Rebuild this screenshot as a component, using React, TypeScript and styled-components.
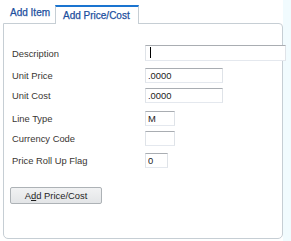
import React from "react";
import styled, { createGlobalStyle } from "styled-components";

const GlobalStyle = createGlobalStyle`
  html, body {
    margin: 0;
    padding: 0;
    background: #f1fbfe;
    font-family: "Liberation Sans", Arial, sans-serif;
  }
`;

const Frame = styled.div`
  width: 283px;
  height: 241px;
  background: #ffffff;
  box-sizing: border-box;
`;

const TabBar = styled.div`
  display: flex;
  align-items: flex-end;
  height: 23px;
  padding: 5px 0 0 3px;
  box-sizing: border-box;
`;

const Tab = styled.div<{ $active?: boolean }>`
  box-sizing: border-box;
  height: ${(p) => (p.$active ? "19px" : "18px")};
  font-size: 10px;
  line-height: 12px;
  color: #1c4f9e;
  -webkit-text-stroke: 0.25px #1c4f9e;
  white-space: nowrap;
  background: #ffffff;
  ${(p) =>
    p.$active
      ? `
    position: relative;
    z-index: 1;
    margin-bottom: -1px;
    border-top: 2px solid #1a74d0;
    border-left: 1px solid #c6ced4;
    border-right: 1px solid #c6ced4;
    padding: 3px 8px 0 7px;
  `
      : `
    width: 52px;
    padding: 2px 0 0 7px;
  `}
`;

const Panel = styled.div`
  margin-left: 3px;
  width: 280px;
  height: 216px;
  box-sizing: border-box;
  border: 1px solid #c6ced4;
  border-radius: 0 4px 5px 5px;
  padding: 21px 0 0 6px;
  display: flex;
  flex-direction: column;
`;

const Row = styled.div<{ $gap: number }>`
  display: grid;
  grid-template-columns: 135px auto;
  align-items: center;
  margin-top: ${(p) => p.$gap}px;
`;

const Label = styled.span`
  padding-left: 2px;
  font-size: 9.4px;
  color: #3a3633;
  white-space: nowrap;
`;

const FieldWrap = styled.div`
  position: relative;
  display: flex;
`;

const Field = styled.input<{ $w: number; $h?: number }>`
  box-sizing: border-box;
  width: ${(p) => p.$w}px;
  height: ${(p) => p.$h ?? 15}px;
  margin: 0;
  padding: 0 0 0 2px;
  border-top: 1px solid #a9adb2;
  border-left: 1px solid #dfe3e8;
  border-right: 1px solid #dfe3e8;
  border-bottom: 1px solid #e4e8ee;
  border-radius: 0;
  background: #ffffff;
  font-family: "Liberation Sans", Arial, sans-serif;
  font-size: 9.4px;
  color: #222222;
  outline: none;
`;

const Caret = styled.span`
  position: absolute;
  left: 5px;
  top: 2px;
  width: 1px;
  height: 11px;
  background: #000000;
`;

const Button = styled.button`
  margin: 19px 0 0 0;
  width: 92px;
  height: 17px;
  box-sizing: border-box;
  padding: 0;
  border: 1px solid #adb2b6;
  border-radius: 2px;
  background: linear-gradient(#f1f2f3, #e3e5e7);
  font-family: "Liberation Sans", Arial, sans-serif;
  font-size: 9.4px;
  color: #1e1e1e;
  align-self: flex-start;
  cursor: pointer;
`;

const Key = styled.span`
  text-decoration: underline;
`;

const rows: { label: string; value: string; w: number; h?: number; gap: number; caret?: boolean }[] = [
  { label: "Description", value: "", w: 141, h: 16, gap: 0, caret: true },
  { label: "Unit Price", value: ".0000", w: 78, gap: 7 },
  { label: "Unit Cost", value: ".0000", w: 78, gap: 5 },
  { label: "Line Type", value: "M", w: 30, gap: 8 },
  { label: "Currency Code", value: "", w: 30, gap: 5 },
  { label: "Price Roll Up Flag", value: "0", w: 23, gap: 7 },
];

export default function App() {
  return (
    <>
      <GlobalStyle />
      <Frame>
        <TabBar>
          <Tab>Add Item</Tab>
          <Tab $active>Add Price/Cost</Tab>
        </TabBar>
        <Panel>
          {rows.map((r) => (
            <Row key={r.label} $gap={r.gap}>
              <Label>{r.label}</Label>
              <FieldWrap>
                <Field $w={r.w} $h={r.h} defaultValue={r.value} />
                {r.caret && <Caret />}
              </FieldWrap>
            </Row>
          ))}
          <Button>
            A<Key>d</Key>d Price/Cost
          </Button>
        </Panel>
      </Frame>
    </>
  );
}
